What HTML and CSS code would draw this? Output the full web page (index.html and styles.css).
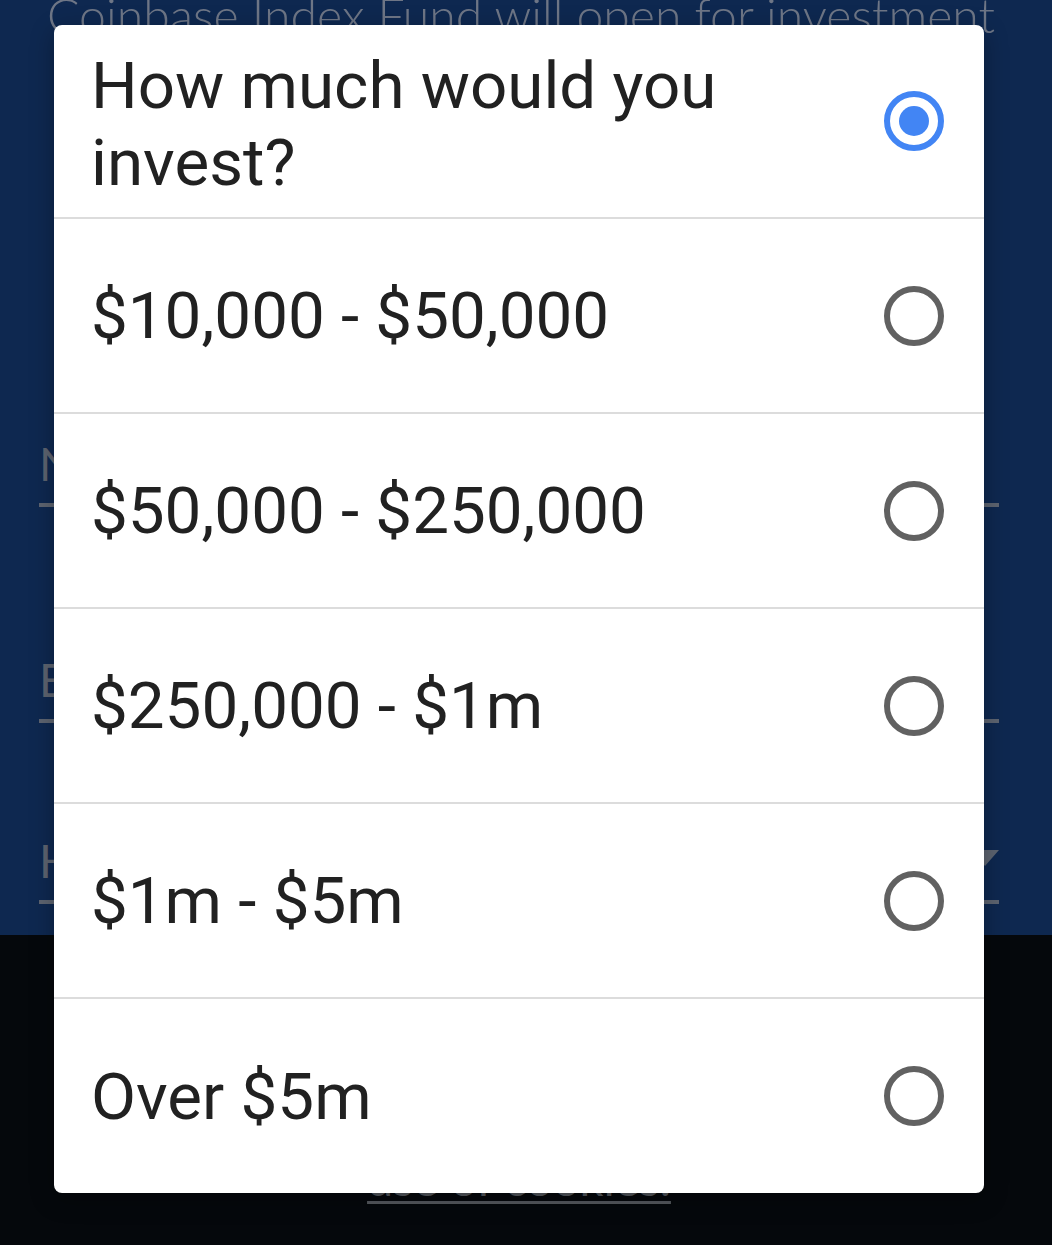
FILE: index.html
```html
<!DOCTYPE html>
<html lang="en">
<head>
    <meta charset="UTF-8">
    <meta name="viewport" content="width=device-width, initial-scale=1.0">
    <title>How much would you invest?</title>
    <link rel="stylesheet" href="styles.css">
</head>
<body>
    <div class="page">
        <section class="hero">
            <h1 class="hero-title">Coinbase Index Fund will open for investment</h1>
            <div class="field field-name"><span class="field-label">Name</span></div>
            <div class="field field-email"><span class="field-label">Email</span></div>
            <div class="field field-amount">
                <span class="field-label">How much would you invest?</span>
                <span class="field-arrow"></span>
            </div>
        </section>
        <footer class="footer">
            <a class="footer-link" href="#">use of cookies.</a>
        </footer>
    </div>

    <div class="dialog">
        <div class="dialog-head">
            <span class="dialog-title">How much would you invest?</span>
            <span class="radio checked"></span>
        </div>
        <label class="option"><span>$10,000 - $50,000</span><span class="radio"></span></label>
        <label class="option"><span>$50,000 - $250,000</span><span class="radio"></span></label>
        <label class="option"><span>$250,000 - $1m</span><span class="radio"></span></label>
        <label class="option"><span>$1m - $5m</span><span class="radio"></span></label>
        <label class="option"><span>Over $5m</span><span class="radio"></span></label>
    </div>
</body>
</html>
```

FILE: styles.css
```css
body {
    margin: 0;
    font-family: Roboto, "Noto Sans", sans-serif;
    background-color: #05080c;
    overflow: hidden;
}
.page {
    width: 1052px;
    height: 1245px;
}
.hero {
    background-color: #0e2850;
    height: 935px;
    padding: 0 53px 0 39px;
    box-sizing: border-box;
    overflow: hidden;
}
.hero-title {
    margin: -14px 0 0 8px;
    font-family: Lato, sans-serif;
    font-weight: 300;
    font-size: 48.2px;
    line-height: 56px;
    color: #6e7686;
    white-space: nowrap;
}
.field {
    position: relative;
    border-bottom: 4px solid #5d6470;
    padding-bottom: 16px;
    white-space: nowrap;
    overflow: hidden;
}
.field-label {
    font-family: Lato, sans-serif;
    font-size: 46px;
    line-height: 46px;
    color: #5d6470;
    display: block;
}
.field-name {
    margin-top: 399px;
}
.field-email {
    margin-top: 150px;
}
.field-amount {
    margin-top: 115px;
}
.field-arrow {
    position: absolute;
    right: 0;
    top: 12px;
    width: 0;
    height: 0;
    border-left: 14px solid transparent;
    border-right: 14px solid transparent;
    border-top: 16px solid #5d6470;
}
.footer {
    height: 310px;
    text-align: center;
    padding-right: 14px;
}
.footer-link {
    display: inline-block;
    margin-top: 222px;
    font-family: Lato, sans-serif;
    font-size: 47px;
    line-height: 42px;
    color: #55595f;
    text-decoration: underline;
    text-underline-offset: 5px;
    text-decoration-thickness: 3px;
}
.dialog {
    position: absolute;
    left: 54px;
    top: 25px;
    width: 930px;
    background-color: #fff;
    border-radius: 8px;
    overflow: hidden;
    box-shadow: 0 6px 24px rgba(0, 0, 0, 0.3);
    color: #212121;
}
.dialog-head,
.option {
    display: flex;
    align-items: center;
    justify-content: space-between;
    padding: 0 40px 0 37px;
    border-bottom: 2px solid #dcdcdc;
}
.dialog-head {
    height: 192px;
}
.dialog-title {
    font-size: 65.5px;
    line-height: 77px;
    width: 700px;
    margin-top: 6px;
}
.option {
    height: 193px;
    font-size: 65.5px;
    cursor: pointer;
}
.option:last-child {
    border-bottom: none;
    height: 194px;
}
.radio {
    position: relative;
    flex: none;
    width: 60px;
    height: 60px;
    box-sizing: border-box;
    border: 6px solid #616161;
    border-radius: 50%;
}
.radio.checked {
    border-color: #4285f4;
}
.radio.checked::after {
    content: "";
    position: absolute;
    left: 9px;
    top: 9px;
    width: 30px;
    height: 30px;
    border-radius: 50%;
    background-color: #4285f4;
}
```
